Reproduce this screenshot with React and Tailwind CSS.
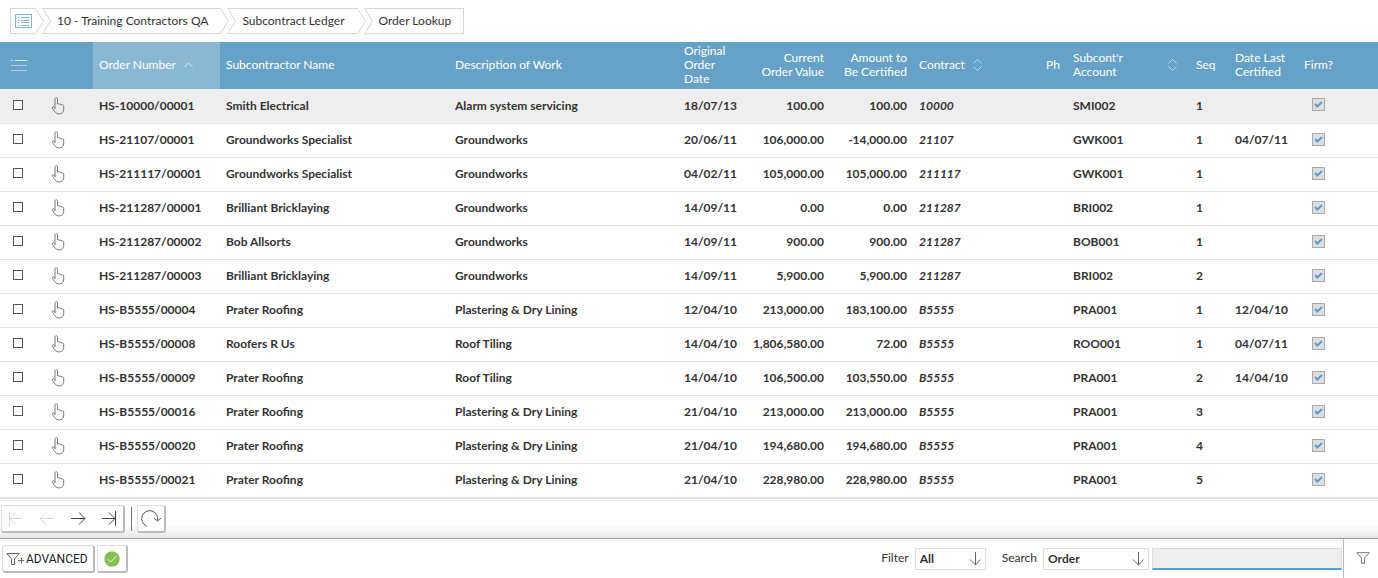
const ROWS = [
  ["HS-10000/00001", "Smith Electrical", "Alarm system servicing", "18/07/13", "100.00", "100.00", "10000", "SMI002", "1", ""],
  ["HS-21107/00001", "Groundworks Specialist", "Groundworks", "20/06/11", "106,000.00", "-14,000.00", "21107", "GWK001", "1", "04/07/11"],
  ["HS-211117/00001", "Groundworks Specialist", "Groundworks", "04/02/11", "105,000.00", "105,000.00", "211117", "GWK001", "1", ""],
  ["HS-211287/00001", "Brilliant Bricklaying", "Groundworks", "14/09/11", "0.00", "0.00", "211287", "BRI002", "1", ""],
  ["HS-211287/00002", "Bob Allsorts", "Groundworks", "14/09/11", "900.00", "900.00", "211287", "BOB001", "1", ""],
  ["HS-211287/00003", "Brilliant Bricklaying", "Groundworks", "14/09/11", "5,900.00", "5,900.00", "211287", "BRI002", "2", ""],
  ["HS-B5555/00004", "Prater Roofing", "Plastering & Dry Lining", "12/04/10", "213,000.00", "183,100.00", "B5555", "PRA001", "1", "12/04/10"],
  ["HS-B5555/00008", "Roofers R Us", "Roof Tiling", "14/04/10", "1,806,580.00", "72.00", "B5555", "ROO001", "1", "04/07/11"],
  ["HS-B5555/00009", "Prater Roofing", "Roof Tiling", "14/04/10", "106,500.00", "103,550.00", "B5555", "PRA001", "2", "14/04/10"],
  ["HS-B5555/00016", "Prater Roofing", "Plastering & Dry Lining", "21/04/10", "213,000.00", "213,000.00", "B5555", "PRA001", "3", ""],
  ["HS-B5555/00020", "Prater Roofing", "Plastering & Dry Lining", "21/04/10", "194,680.00", "194,680.00", "B5555", "PRA001", "4", ""],
  ["HS-B5555/00021", "Prater Roofing", "Plastering & Dry Lining", "21/04/10", "228,980.00", "228,980.00", "B5555", "PRA001", "5", ""],
];

const CRUMBS = ["10 - Training Contractors QA", "Subcontract Ledger", "Order Lookup"];

function Notch() {
  return (
    <svg width="9" height="26" viewBox="0 0 9 26" fill="none" stroke="#d6d6d6" className="shrink-0" aria-hidden="true">
      <path d="M9 .5H.7L8.5 13 .7 25.5H9" />
    </svg>
  );
}

function Point() {
  return (
    <svg width="9" height="26" viewBox="0 0 9 26" fill="none" stroke="#d6d6d6" className="shrink-0" aria-hidden="true">
      <path d="M0 .5h.5L8.5 13 .5 25.5H0" />
    </svg>
  );
}

function Breadcrumbs() {
  return (
    <nav aria-label="Breadcrumb" className="flex px-2.5 py-2">
      <ol className="flex h-[26px] text-[#333]">
        <li className="flex">
          <a href="#menu" aria-label="Menu" className="flex items-center border-y border-l border-[#d6d6d6] pr-0.5 pl-1">
            <svg width="18" height="15" viewBox="0 0 18 15" fill="none" aria-hidden="true">
              <rect x=".5" y=".5" width="16" height="13" stroke="#84b5d4" />
              <path d="M3 3.5h1.500M6 3.500h8.500M3 6.500h1.500M6 6.500h8.500M3 8.500h1.500M6 8.500h8.500M3 11.500h1.500M6 11.500h8.500" stroke="#84b5d4" />
            </svg>
          </a>
          <Point />
        </li>
        {CRUMBS.map((label, i) => (
          <li key={label} className="-ml-0.5 flex">
            <Notch />
            <a
              href="#crumb"
              className={
                i === CRUMBS.length - 1
                  ? "flex items-center border-y border-r border-[#d6d6d6] pr-3 pl-1.5"
                  : "flex items-center border-y border-[#d6d6d6] pr-3 pl-1.5"
              }
            >
              {label}
            </a>
            {i < CRUMBS.length - 1 && <Point />}
          </li>
        ))}
      </ol>
    </nav>
  );
}

function Sorter() {
  return (
    <svg width="9" height="12" viewBox="0 0 9 12" fill="none" stroke="#c3dcea" className="shrink-0" aria-hidden="true">
      <path d="M.5 4.500l4-4 4 4M.5 7.500l4 4 4-4" />
    </svg>
  );
}

function Hand() {
  return (
    <svg width="14" height="18" viewBox="0 0 14 18" fill="none" stroke="#777" strokeLinejoin="round" strokeLinecap="round" className="block" aria-hidden="true">
      <path d="M4 11.500V2.200C4 .2 6.500.2 6.500 2.200V7c1-.6 2-.4 2.200.5.700-.5 1.800-.3 2 .5.900-.4 2 0 2 1.200v3.200c0 2.700-1.700 4.500-4.200 4.500-2.200 0-3.500-.7-4.600-2.200L1.500 11.500c-.7-1.300.6-2.400 1.500-1.300L4 11.500" />
    </svg>
  );
}

function OrdersTable() {
  return (
    <table className="w-full min-w-[1360px] table-fixed border-collapse text-left">
      <colgroup>
        <col className="w-[38px]" />
        <col className="w-[55px]" />
        <col className="w-[127px]" />
        <col className="w-[229px]" />
        <col className="w-[229px]" />
        <col className="w-[66px]" />
        <col className="w-[86px]" />
        <col className="w-[83px]" />
        <col className="w-[127px]" />
        <col className="w-[27px]" />
        <col className="w-[123px]" />
        <col className="w-[39px]" />
        <col className="w-[69px]" />
        <col />
      </colgroup>
      <thead className="bg-[#66a2c7] leading-[14px] text-white">
        <tr className="h-[47px] [&>th]:px-1.5 [&>th]:pt-0 [&>th]:pb-0.5 [&>th]:font-normal">
          <th>
            <button type="button" aria-label="List options" className="ml-1 block">
              <svg width="18" height="12" viewBox="0 0 18 12" fill="none" aria-hidden="true">
                <path d="M1 1.500h2M5 1.500h12" stroke="#d3e5f0" />
                <path d="M1 6.500h16M1 11.500h16" stroke="#b3d0e2" />
              </svg>
            </button>
          </th>
          <th aria-label="Select"></th>
          <th className="bg-[#8ab8d3]">
            <span className="flex items-center gap-2">
              Order Number
              <svg width="9" height="6" viewBox="0 0 9 6" fill="none" stroke="#e3eff6" aria-hidden="true">
                <path d="M.5 5l4-4 4 4" />
              </svg>
            </span>
          </th>
          <th>Subcontractor Name</th>
          <th>Description of Work</th>
          <th>Original<br />Order<br />Date</th>
          <th className="text-right">Current<br />Order Value</th>
          <th className="text-right">Amount to<br />Be Certified</th>
          <th><span className="flex items-center gap-2">Contract <Sorter /></span></th>
          <th>Ph</th>
          <th>
            <span className="flex items-center justify-between pr-[7px]">
              <span>Subcont&apos;r<br />Account</span>
              <Sorter />
            </span>
          </th>
          <th>Seq</th>
          <th>Date Last<br />Certified</th>
          <th>Firm?</th>
        </tr>
      </thead>
      <tbody className="font-bold text-[#333]">
        {ROWS.map((r, i) => (
          <tr
            key={r[0]}
            className={
              i === 0
                ? "h-[34px] border-b border-[#e4e4e4] bg-[#eee] [&>td]:px-1.5 [&>td]:py-0"
                : "h-[34px] border-b border-[#e4e4e4] [&>td]:px-1.5 [&>td]:py-0"
            }
          >
            <td>
              <input
                type="checkbox"
                aria-label={"Tick " + r[0]}
                className="mb-0.5 ml-[7px] block size-2.5 appearance-none border border-[#555] bg-white checked:bg-[#66a2c7]"
              />
            </td>
            <td>
              <button type="button" aria-label={"Select " + r[0]} className="ml-[7px] block">
                <Hand />
              </button>
            </td>
            <td>{r[0]}</td>
            <td>{r[1]}</td>
            <td>{r[2]}</td>
            <td className="whitespace-nowrap">{r[3]}</td>
            <td className="text-right">{r[4]}</td>
            <td className="text-right">{r[5]}</td>
            <td className="italic">{r[6]}</td>
            <td></td>
            <td>{r[7]}</td>
            <td>{r[8]}</td>
            <td className="whitespace-nowrap">{r[9]}</td>
            <td>
              <span className="mb-0.5 ml-2 grid size-[13px]">
                <input
                  type="checkbox"
                  defaultChecked
                  disabled
                  aria-label={"Firm " + r[0]}
                  className="col-start-1 row-start-1 size-[13px] appearance-none border border-[#aaa] bg-[#dedede]"
                />
                <svg width="13" height="13" viewBox="0 0 13 13" fill="none" stroke="#5b9bd5" strokeWidth="2" className="col-start-1 row-start-1" aria-hidden="true">
                  <path d="M3 6l2.300 2.500L10 4" />
                </svg>
              </span>
            </td>
          </tr>
        ))}
      </tbody>
    </table>
  );
}

const PAGER = [
  ["First page", "M1.500 0v15M2 7.500h12M8 1.500l-6 6 6 6", true],
  ["Previous page", "M1 7.500h14M7 1.500l-6 6 6 6", true],
  ["Next page", "M1 7.500h14M9 1.500l6 6-6 6", false],
  ["Last page", "M14.500 0v15M1 7.500h13M8 1.500l6 6-6 6", false],
];

function Pager() {
  return (
    <div className="flex h-[38px] items-center border-t border-[#e8e8e8] bg-linear-to-b from-white from-65% to-[#e6e6e6] px-px">
      <div className="flex h-7 items-center gap-[15px] rounded-[3px] border border-r-2 border-b-2 border-[#ddd] border-r-[#bbb] border-b-[#bbb] bg-white px-1.5">
        {PAGER.map(([label, d, off]) => (
          <button key={label} type="button" aria-label={label} disabled={off} className={off ? "text-[#d5d5d5]" : "text-[#444]"}>
            <svg width="16" height="15" viewBox="0 0 16 15" fill="none" stroke="currentColor" className="block" aria-hidden="true">
              <path d={d} />
            </svg>
          </button>
        ))}
      </div>
      <div className="mr-[5px] ml-1.5 h-6 w-px bg-[#777]"></div>
      <button
        type="button"
        aria-label="Refresh"
        className="flex h-7 w-[29px] items-center justify-center rounded-[3px] border border-r-2 border-b-2 border-[#ddd] border-r-[#bbb] border-b-[#bbb] bg-white"
      >
        <svg width="20" height="17" viewBox="0 0 20 17" fill="none" stroke="#555" aria-hidden="true">
          <path d="M5.500 16A8 8 0 1 1 16.500 10.500M13 8l3.500 3L20 8" />
        </svg>
      </button>
    </div>
  );
}

function Dropdown({ id, label, value, wide }) {
  return (
    <>
      <label htmlFor={id} className="-mt-0.5 mr-1.5">{label}</label>
      <span className={wide ? "grid w-[106px]" : "mr-4 grid w-[71px]"}>
        <select
          id={id}
          defaultValue={value}
          className="col-start-1 row-start-1 h-[22px] appearance-none border border-[#ddd] bg-white pl-1 font-bold text-[#333]"
        >
          <option>{value}</option>
        </select>
        <svg width="12" height="14" viewBox="0 0 12 14" fill="none" stroke="#666" className="pointer-events-none col-start-1 row-start-1 mr-[5px] self-center justify-self-end" aria-hidden="true">
          <path d="M6.500 0v13M1 7.500L6.500 13l5-5.500" />
        </svg>
      </span>
    </>
  );
}

function SearchBar() {
  return (
    <div className="flex items-stretch justify-between border-t border-[#999]">
      <div className="mt-px flex h-[38px] flex-1 items-center justify-between border-t border-[#eee]">
        <div className="flex gap-0.5 pl-0.5">
          <button
            type="button"
            className="flex h-7 w-[93px] items-center gap-px rounded-[3px] border border-r-2 border-b-2 border-[#ddd] border-r-[#bbb] border-b-[#bbb] bg-white pl-[3px] font-[Roboto,sans-serif] text-[12px] text-[#222]"
          >
            <svg width="19" height="12" viewBox="0 0 19 12" fill="none" stroke="#666" className="shrink-0" aria-hidden="true">
              <path d="M.8.5h12.400L8.500 6v5.500h-3V6zM12 7.500h6M15.500 4.500v6" />
            </svg>
            ADVANCED
          </button>
          <button
            type="button"
            aria-label="Apply"
            className="flex h-7 w-[31px] items-center justify-center rounded-[3px] border border-r-2 border-b-2 border-[#ddd] border-r-[#bbb] border-b-[#bbb] bg-white"
          >
            <svg width="16" height="16" viewBox="0 0 16 16" fill="none" aria-hidden="true">
              <circle cx="8" cy="8" r="7.700" fill="#83bf52" />
              <path d="M4 8.300l2.700 2.700L12.300 5.200" stroke="#fff" />
            </svg>
          </button>
        </div>
        <div className="flex items-center pr-px text-[#333]">
          <Dropdown id="filter" label="Filter" value="All" />
          <Dropdown id="search" label="Search" value="Order" wide />
          <input
            type="text"
            aria-label="Search text"
            className="ml-[3px] h-[22px] w-[190px] border border-b-2 border-[#ddd] border-b-[#5b9fcb] bg-[#eee] px-1 outline-none"
          />
        </div>
      </div>
      <button type="button" aria-label="Filter results" className="flex w-[35px] items-center justify-center border-l border-[#bbb] pl-[3px]">
        <svg width="14" height="12" viewBox="0 0 14 12" fill="none" stroke="#777" aria-hidden="true">
          <path d="M.8.700h12.400L8.500 6v5.300h-3V6z" />
        </svg>
      </button>
    </div>
  );
}

export default function App() {
  return (
    <div className="bg-white font-[Lato,sans-serif] text-[12px] leading-4">
      <Breadcrumbs />
      <OrdersTable />
      <div className="mb-px h-px bg-[#e8e8e8]"></div>
      <Pager />
      <SearchBar />
    </div>
  );
}
